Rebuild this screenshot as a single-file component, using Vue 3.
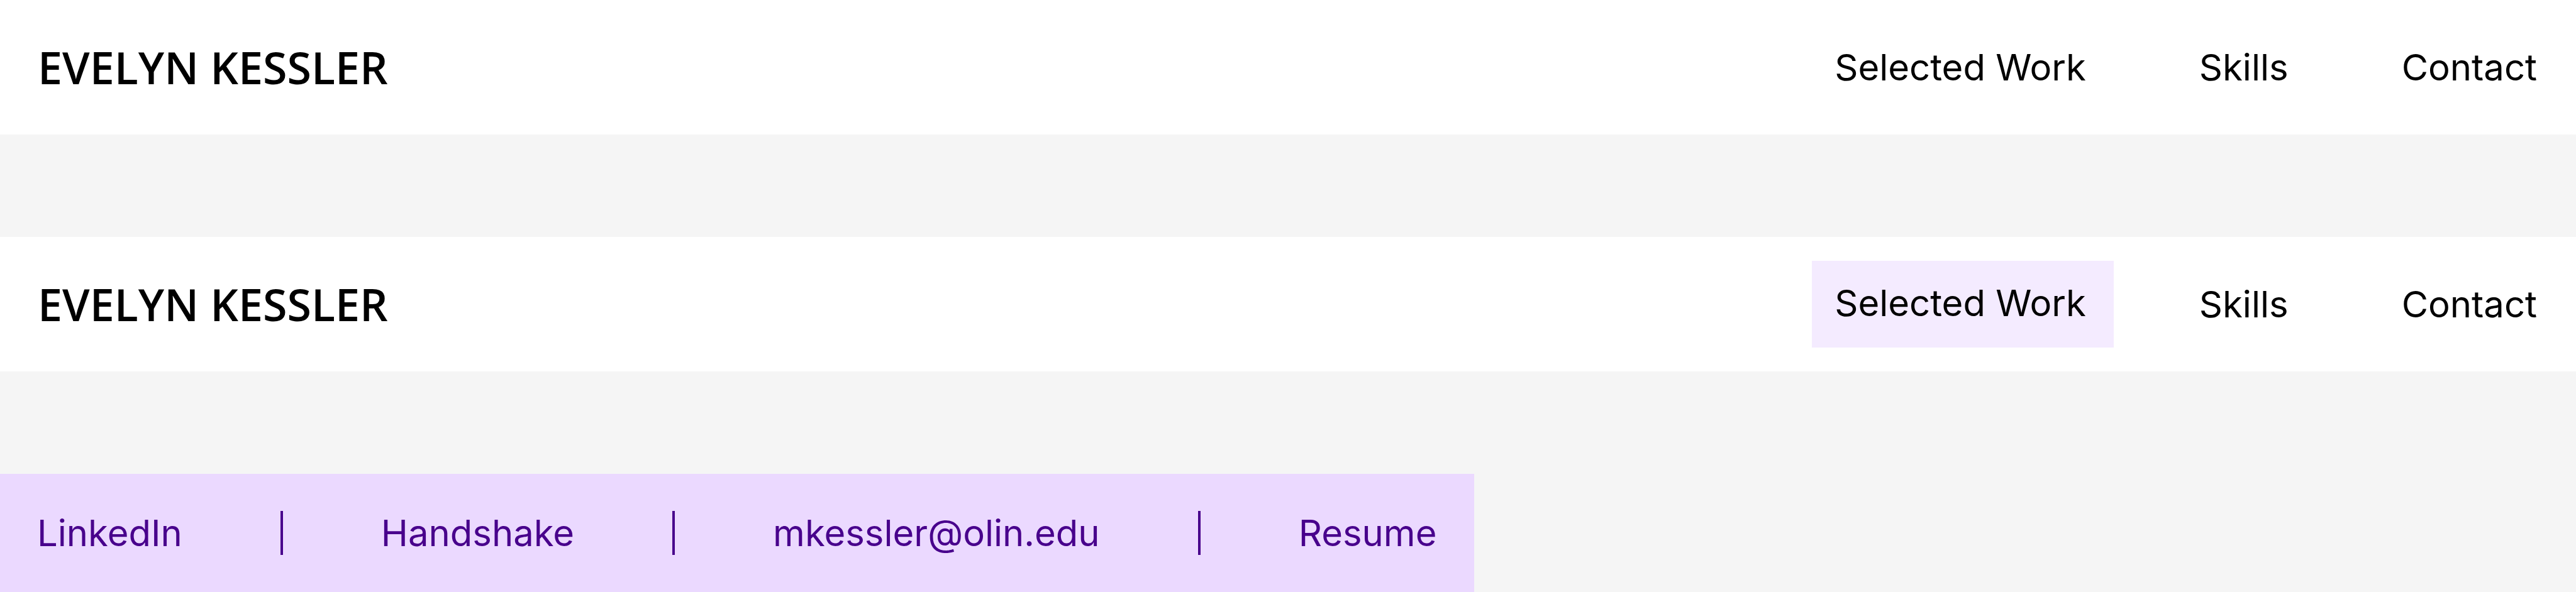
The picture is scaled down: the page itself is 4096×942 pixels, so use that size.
<script setup>
const navs = [{ active: false }, { active: true }]
const items = ['Selected Work', 'Skills', 'Contact']
const contacts = ['LinkedIn', 'Handshake', 'mkessler@olin.edu', 'Resume']
</script>

<template>
  <main class="page">
    <header v-for="(nav, n) in navs" :key="n" class="bar">
      <a href="#" class="brand">EVELYN KESSLER</a>
      <nav class="links">
        <a v-for="(item, i) in items" :key="item" href="#" class="link" :class="{ active: nav.active && i === 0 }">{{ item }}</a>
      </nav>
    </header>
    <footer class="contacts">
      <template v-for="(c, i) in contacts" :key="c">
        <span v-if="i" class="divider"></span>
        <a href="#" class="contact">{{ c }}</a>
      </template>
    </footer>
  </main>
</template>

<style>
body { margin: 0; background: #f5f5f5; }
</style>

<style scoped>
.page { display: flex; flex-direction: column; gap: 163px; font-family: Inter, sans-serif; }
.bar { display: flex; align-items: center; justify-content: space-between; padding: 38px 18px 38px 60px; background: #fff; }
.brand { font: 600 70px/96px "Open Sans", sans-serif; color: #000; text-decoration: none; }
.links { display: flex; gap: 100px; }
.link { padding: 34px 44px 34px 36px; font-size: 58px; line-height: 70px; color: #000; text-decoration: none; }
.active { padding-top: 32px; padding-bottom: 36px; background: #f4ebff; }
.contacts { display: flex; align-items: center; align-self: flex-start; gap: 156px; padding: 59px; background: #ebd9ff; }
.contact { font-size: 58px; line-height: 70px; color: #48008c; text-decoration: none; }
.divider { width: 4px; height: 70px; background: #48008c; }
</style>
